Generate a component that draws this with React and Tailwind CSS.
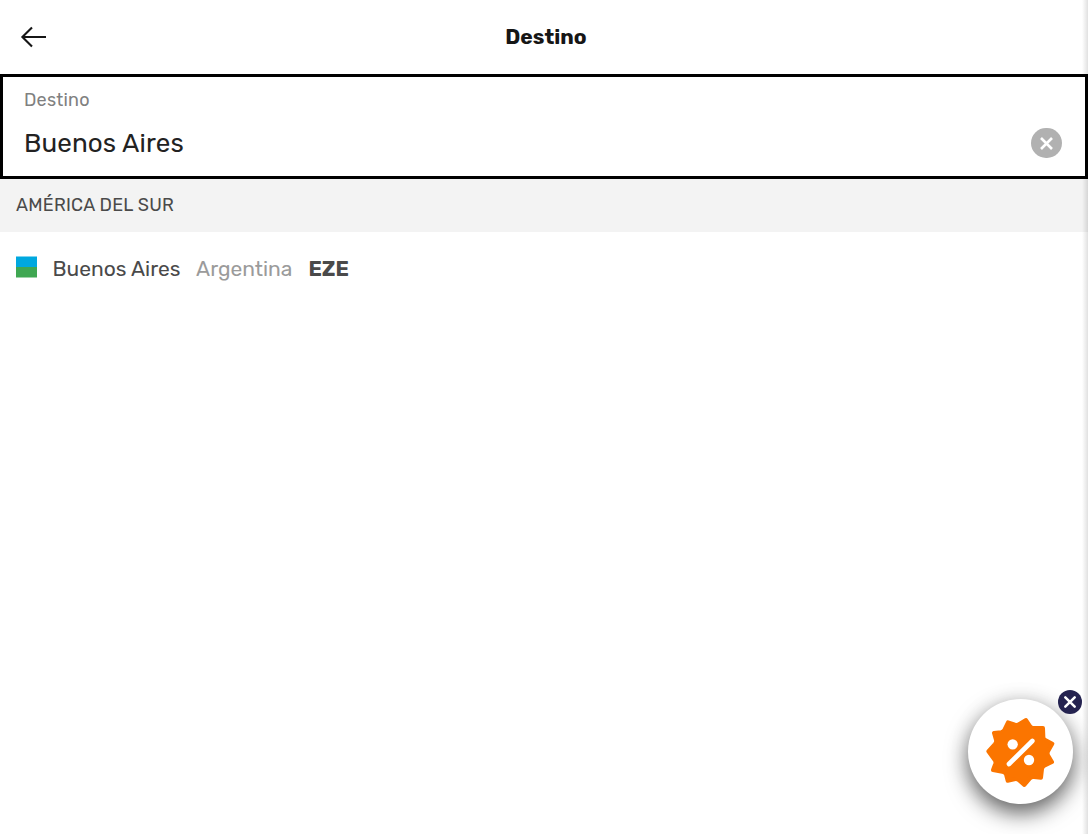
import React from 'react';

function Header() {
  return (
    <header className="relative flex h-[74px] shrink-0 items-center justify-center pl-1">
      <button aria-label="Volver" className="absolute left-5 top-[26px]">
        <svg width="28" height="22" viewBox="0 0 28 22" fill="none" stroke="#161616" strokeWidth="2.1">
          <path d="M26 11H2M12 1.5L2.4 11L12 20.5" />
        </svg>
      </button>
      <h1 className="text-[21px] leading-6 font-bold tracking-[0.02px] text-[#161616]">Destino</h1>
    </header>
  );
}

function SearchField() {
  return (
    <section className="flex h-[105px] shrink-0 items-start justify-between border-[3px] border-black pl-[21px] pr-[23px]">
      <div className="pt-[11px]">
        <div className="text-[18px] leading-6 tracking-[0.2px] text-[#808080]">Destino</div>
        <div className="mt-4 text-[26px] leading-8 tracking-[0.12px] text-[#222]">Buenos Aires</div>
      </div>
      <button aria-label="Borrar" className="mt-[51px] flex h-[30px] w-[31px] items-center justify-center rounded-full bg-[#b1b1b1]">
        <svg width="13" height="13" viewBox="0 0 13 13" stroke="#fff" strokeWidth="2.6">
          <path d="M1 1L12 12M12 1L1 12" />
        </svg>
      </button>
    </section>
  );
}

function PromoBadge() {
  return (
    <div className="absolute left-[968px] top-[699px] flex size-[105px] items-center justify-center rounded-full bg-white shadow-[0_9px_22px_rgba(0,0,0,0.62),0_0_24px_rgba(0,0,0,0.06)]">
      <svg className="translate-y-px" width="75" height="75" viewBox="105 105 225 225" aria-label="Ofertas">
        <path
          d="M234 120L246 138Q250 145 258 144L285 144L286 170Q286 177 292 180L313 191L301 212Q297 219 300 226L312 246L289 257Q283 261 282 267L279 293L258 291Q250 290 245 296L229 315L212 300Q206 296 199 298L179 302L174 283Q171 276 163 275L135 270L142 251Q144 244 139 239L121 214L140 193Q146 186 144 180L138 159L159 157Q166 156 169 150L180 127L201 134Q208 136 214 132Z"
          fill="#fb7500"
          stroke="#fb7500"
          strokeWidth="12"
          strokeLinejoin="round"
        />
        <path d="M183 252L253 183" stroke="#fff" strokeWidth="14" strokeLinecap="round" />
        <circle cx="194" cy="193" r="15.5" fill="#fff" />
        <circle cx="243" cy="240" r="15.5" fill="#fff" />
      </svg>
      <button aria-label="Cerrar" className="absolute left-[90px] top-[-9px] flex size-6 items-center justify-center rounded-full bg-[#252350]">
        <svg width="14" height="14" viewBox="0 0 14 14" stroke="#fff" strokeWidth="2.5" strokeLinecap="round">
          <path d="M2.3 2.3L11.7 11.7M11.7 2.3L2.3 11.7" />
        </svg>
      </button>
    </div>
  );
}

export default function App() {
  return (
    <main className="relative flex h-[834px] w-[1088px] flex-col overflow-hidden bg-white font-['Rubik','Roboto',sans-serif]">
      <Header />
      <SearchField />
      <h2 className="flex h-[53px] shrink-0 items-center bg-[#f3f3f3] pl-4 text-[18px] tracking-[0.22px] text-[#4a4a4a]">AMÉRICA DEL SUR</h2>
      <div className="flex h-[74px] items-center pl-4 text-[21px]">
        <span className="mr-[15.5px] flex size-[21px] translate-y-[-2.5px] flex-col bg-linear-to-b from-[#00a8df] from-[52%] to-[#3fa752] to-[52%]" />
        <span className="mr-[15.7px] text-[#4a4a4a]">Buenos Aires</span>
        <span className="mr-4 text-[#9b9b9b]">Argentina</span>
        <span className="font-bold text-[#4a4a4a]">EZE</span>
      </div>
      <PromoBadge />
      <div className="pointer-events-none absolute right-0 top-0 h-[74px] w-1.5 bg-linear-to-r from-transparent to-black/12" />
      <div className="pointer-events-none absolute right-0 top-[179px] h-[655px] w-1.5 bg-linear-to-r from-transparent to-black/12" />
    </main>
  );
}
